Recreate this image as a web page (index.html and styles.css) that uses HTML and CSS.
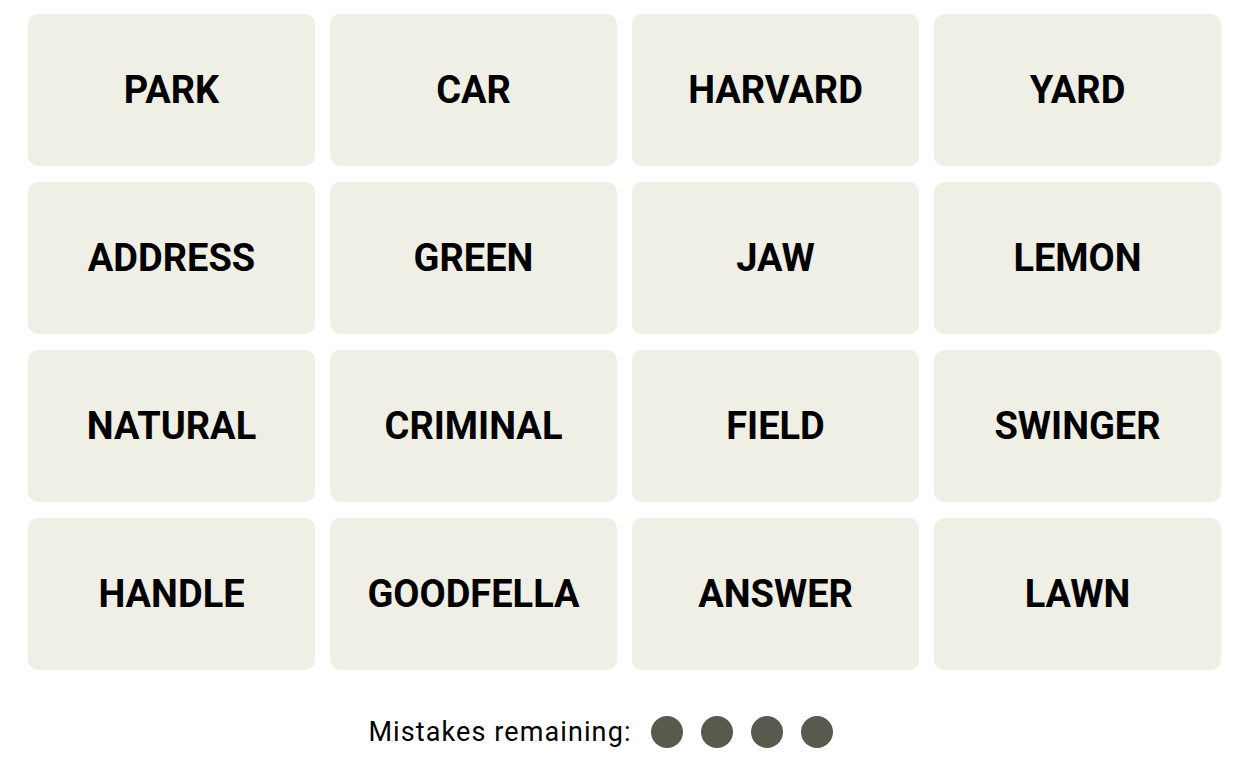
FILE: index.html
```html
<!DOCTYPE html>
<html lang="en">
<head>
  <meta charset="UTF-8" />
  <title>Connections</title>
  <link rel="stylesheet" href="styles.css">
</head>
<body>
  <div class="board">
    <button class="tile">PARK</button>
    <button class="tile">CAR</button>
    <button class="tile">HARVARD</button>
    <button class="tile">YARD</button>
    <button class="tile">ADDRESS</button>
    <button class="tile">GREEN</button>
    <button class="tile">JAW</button>
    <button class="tile">LEMON</button>
    <button class="tile">NATURAL</button>
    <button class="tile">CRIMINAL</button>
    <button class="tile">FIELD</button>
    <button class="tile">SWINGER</button>
    <button class="tile">HANDLE</button>
    <button class="tile">GOODFELLA</button>
    <button class="tile">ANSWER</button>
    <button class="tile">LAWN</button>
  </div>

  <div class="mistakes">
    <span class="label">Mistakes remaining:</span>
    <div class="dots">
      <span class="dot"></span>
      <span class="dot"></span>
      <span class="dot"></span>
      <span class="dot"></span>
    </div>
  </div>
</body>
</html>
```

FILE: styles.css
```css
body {
  margin: 0;
  background: #fff;
  font-family: 'Roboto', 'Liberation Sans', sans-serif;
  color: #000;
}

.board {
  display: grid;
  grid-template-columns: repeat(4, 287px);
  grid-auto-rows: 152px;
  column-gap: 15px;
  row-gap: 16px;
  padding: 14px 0 0 28px;
}

.tile {
  border: none;
  background: #efefe6;
  border-radius: 10px;
  font-family: inherit;
  font-weight: 700;
  font-size: 38px;
  color: #000;
  display: flex;
  align-items: center;
  justify-content: center;
  padding: 0;
}

.mistakes {
  display: flex;
  align-items: center;
  justify-content: center;
  gap: 19px;
  margin-top: 46px;
  padding-right: 49px;
}

.label {
  font-size: 27px;
  letter-spacing: 1.1px;
}

.dots {
  display: flex;
  gap: 18px;
}

.dot {
  width: 32px;
  height: 32px;
  border-radius: 50%;
  background: #5a594e;
}
```
